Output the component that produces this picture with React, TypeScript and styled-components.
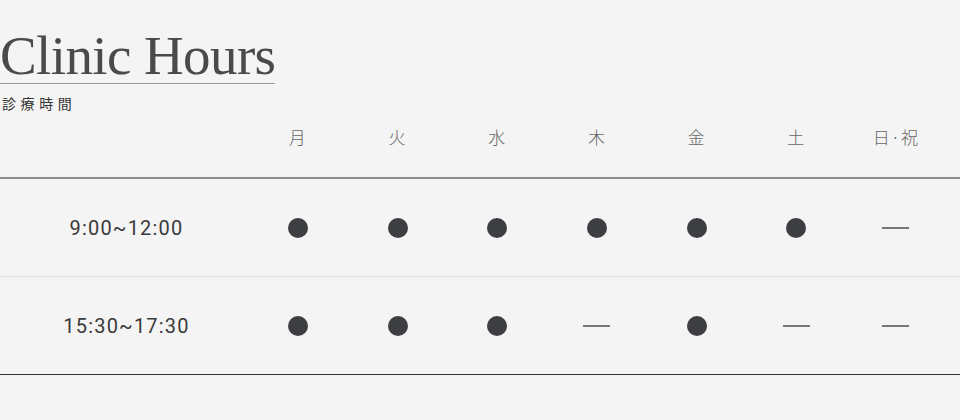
import React from "react";
import styled, { createGlobalStyle } from "styled-components";

const Global = createGlobalStyle`
  html, body { margin: 0; padding: 0; background: #f4f4f4; }
  body { font-family: "Noto Sans CJK JP", "Noto Sans", sans-serif; }
`;

const Page = styled.div`
  width: 960px;
  padding-top: 30px;
`;

const Heading = styled.div`
  display: inline-flex;
  flex-direction: column;
`;

const Title = styled.h1`
  margin: 0;
  font-family: "Liberation Serif", serif;
  font-weight: 400;
  font-size: 55px;
  line-height: 52px;
  letter-spacing: -0.6px;
  color: #4a4a4a;
  padding-bottom: 1px;
  border-bottom: 1px solid #999;
  width: 275px;
  white-space: nowrap;
`;

const Sub = styled.div`
  margin-top: 10px;
  padding-left: 2px;
  font-size: 14px;
  line-height: 18px;
  letter-spacing: 4.6px;
  color: #333;
`;

const HeaderRow = styled.div`
  display: grid;
  grid-template-columns: 248px repeat(7, 99.7px);
  align-items: center;
  padding: 13px 0 28px;
  border-bottom: 2px solid #8c8c8c;
`;

const BodyRow = styled.div<{ $line: string }>`
  display: grid;
  grid-template-columns: 248px repeat(7, 99.7px);
  align-items: center;
  height: 97px;
  border-bottom: 1px solid ${(p) => p.$line};
`;

const DayCell = styled.div`
  text-align: center;
  font-size: 17px;
  line-height: 24px;
  font-weight: 300;
  color: #666;
  letter-spacing: 1px;
`;

const TimeCell = styled.div`
  text-align: center;
  font-family: Roboto, "Noto Sans", sans-serif;
  font-size: 20px;
  letter-spacing: 1.2px;
  color: #3a3a3a;
  padding-left: 5px;
`;

const Mark = styled.div`
  display: flex;
  justify-content: center;
  align-items: center;
`;

const Dot = styled.span`
  width: 20px;
  height: 20px;
  border-radius: 50%;
  background: #3d3e42;
`;

const Dash = styled.span`
  width: 27px;
  height: 2px;
  background: #777;
`;

const days = ["月", "火", "水", "木", "金", "土", "日·祝"];
const rows: { time: string; open: boolean[] }[] = [
  { time: "9:00~12:00", open: [true, true, true, true, true, true, false] },
  { time: "15:30~17:30", open: [true, true, true, false, true, false, false] },
];

export default function App() {
  return (
    <Page>
      <Global />
      <Heading>
        <Title>Clinic Hours</Title>
        <Sub>診療時間</Sub>
      </Heading>
      <HeaderRow>
        <div />
        {days.map((d) => (
          <DayCell key={d}>{d}</DayCell>
        ))}
      </HeaderRow>
      {rows.map((r, i) => (
        <BodyRow key={r.time} $line={i === 0 ? "#dcdcdc" : "#333"}>
          <TimeCell>{r.time}</TimeCell>
          {r.open.map((o, j) => (
            <Mark key={j}>{o ? <Dot /> : <Dash />}</Mark>
          ))}
        </BodyRow>
      ))}
    </Page>
  );
}
